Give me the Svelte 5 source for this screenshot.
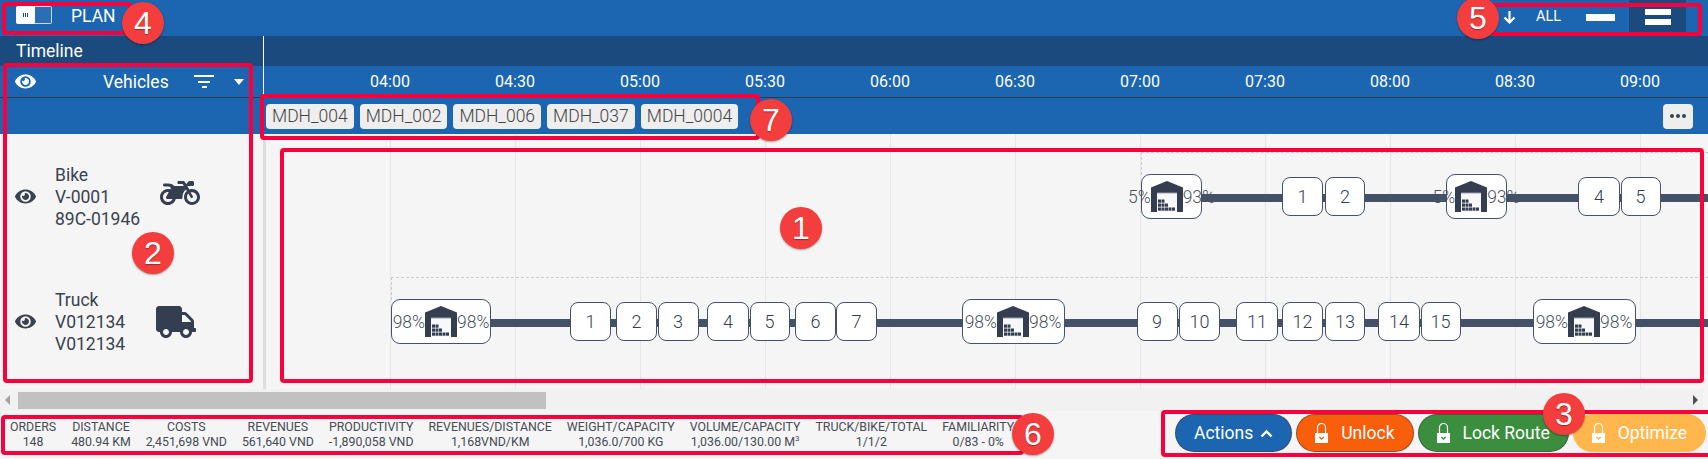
<script>
	const times = ['04:00', '04:30', '05:00', '05:30', '06:00', '06:30', '07:00', '07:30', '08:00', '08:30', '09:00'];
	const chips = ['MDH_004', 'MDH_002', 'MDH_006', 'MDH_037', 'MDH_0004'];

	// canvas origin is 266,134
	const grid = times.map((_, i) => 124 + i * 125);

	const lanes = [
		{ x: 875, top: 18, lineY: 64, lineX: 936 },
		{ x: 125, top: 143, lineY: 189, lineX: 225 }
	];

	const depots = [
		{ x: 875, y: 40, w: 61, a: '5%', b: '93%' },
		{ x: 1179.5, y: 40, w: 61, a: '5%', b: '93%' },
		{ x: 125, y: 165, w: 100, a: '98%', b: '98%' },
		{ x: 695.5, y: 165, w: 103, a: '98%', b: '98%' },
		{ x: 1266.5, y: 165, w: 103, a: '98%', b: '98%' }
	];

	const stops = [
		{ n: 1, x: 1016, y: 43, w: 41 },
		{ n: 2, x: 1059, y: 43, w: 40 },
		{ n: 4, x: 1312, y: 43, w: 42 },
		{ n: 5, x: 1354.5, y: 43, w: 40 },
		{ n: 1, x: 304, y: 168, w: 41 },
		{ n: 2, x: 350, y: 168, w: 41 },
		{ n: 3, x: 391.5, y: 168, w: 41 },
		{ n: 4, x: 441, y: 168, w: 42 },
		{ n: 5, x: 483.5, y: 168, w: 40 },
		{ n: 6, x: 529, y: 168, w: 41 },
		{ n: 7, x: 570, y: 168, w: 41 },
		{ n: 9, x: 870.5, y: 168, w: 41 },
		{ n: 10, x: 913, y: 168, w: 41 },
		{ n: 11, x: 970, y: 168, w: 42 },
		{ n: 12, x: 1016, y: 168, w: 41 },
		{ n: 13, x: 1059, y: 168, w: 40 },
		{ n: 14, x: 1112, y: 168, w: 42 },
		{ n: 15, x: 1154.5, y: 168, w: 40 }
	];

	const stats = [
		['ORDERS', '148'],
		['DISTANCE', '480.94 KM'],
		['COSTS', '2,451,698 VND'],
		['REVENUES', '561,640 VND'],
		['PRODUCTIVITY', '-1,890,058 VND'],
		['REVENUES/DISTANCE', '1,168VND/KM'],
		['WEIGHT/CAPACITY', '1,036.0/700 KG'],
		['VOLUME/CAPACITY', '1,036.00/130.00 M', '3'],
		['TRUCK/BIKE/TOTAL', '1/1/2'],
		['FAMILIARITY', '0/83 - 0%']
	];

	const boxes = [
		[7, 18.5], [10.5, 18.5],
		[7, 22.5], [10.5, 22.5], [14, 22.5],
		[7, 26.5], [10.5, 26.5], [14, 26.5], [17.5, 26.5], [21, 26.5]
	];

	const frames = [
		{ x: 2, y: 2, w: 130, h: 33 },
		{ x: 3, y: 63, w: 250, h: 320 },
		{ x: 280, y: 148, w: 1424, h: 235 },
		{ x: 260, y: 94, w: 500, h: 46 },
		{ x: 1491, y: 3, w: 211, h: 33 },
		{ x: 1, y: 415, w: 1023, h: 40 },
		{ x: 1161, y: 410, w: 560, h: 47 }
	];

	const badges = [
		{ n: 1, x: 801, y: 228 },
		{ n: 2, x: 153, y: 253 },
		{ n: 3, x: 1564, y: 414 },
		{ n: 4, x: 143, y: 23 },
		{ n: 5, x: 1478, y: 18 },
		{ n: 6, x: 1033, y: 434 },
		{ n: 7, x: 771, y: 120 }
	];
</script>

{#snippet eye()}
	<svg class="eye" viewBox="0 0 576 512">
		<path fill="currentColor" d="M572.52 241.4C518.29 135.59 410.93 64 288 64S57.68 135.64 3.48 241.41a32.35 32.35 0 0 0 0 29.19C57.71 376.41 165.07 448 288 448s230.32-71.64 284.52-177.41a32.35 32.35 0 0 0 0-29.19zM288 400a144 144 0 1 1 144-144 143.93 143.93 0 0 1-144 144zm0-240a95.31 95.31 0 0 0-25.31 3.79 47.85 47.85 0 0 1-66.9 66.9A95.78 95.78 0 1 0 288 160z" />
	</svg>
{/snippet}

{#snippet lock()}
	<svg class="lock" viewBox="0 0 13 20">
		<path d="M2.5 11V4.5a4 4 0 0 1 8 0V11" fill="none" stroke="#fff" stroke-width="1.2" />
		<rect y="10" width="13" height="10" fill="#fff" />
		<path class="tick" d="M4.3 14l2.2 2 2.2-2" fill="none" stroke-width="1.4" />
	</svg>
{/snippet}

<div class="page">
	<header class="topbar">
		<div class="left">
			<span class="toggle">
				<span class="on"><i></i><i></i><i></i></span>
				<span class="off"></span>
			</span>
			<span class="plan">PLAN</span>
		</div>
		<div class="right">
			<svg class="arrow" viewBox="0 0 13 14">
				<path d="M6.5 1v11M1.5 7.5l5 5 5-5" fill="none" stroke="#fff" stroke-width="2.2" />
			</svg>
			<span class="all">ALL</span>
			<span class="dash"></span>
			<span class="dbl"><i></i><i></i></span>
		</div>
	</header>

	<div class="tl-row">
		<div class="tl-left">Timeline</div>
		<div class="tl-right"></div>
	</div>

	<div class="head">
		<div class="head-left">
			{@render eye()}
			<span class="veh">Vehicles</span>
			<span class="filter"><i></i><i></i><i></i></span>
			<span class="caret"></span>
		</div>
		<div class="times">
			{#each times as t}
				<span>{t}</span>
			{/each}
		</div>
	</div>

	<div class="chips-row">
		<div class="chips">
			{#each chips as c}
				<span class="chip">{c}</span>
			{/each}
		</div>
		<button class="more"><i></i><i></i><i></i></button>
	</div>

	<div class="main">
		<aside class="vehicles">
			<div class="vehicle">
				{@render eye()}
				<div class="info">
					<div>Bike</div>
					<div>V-0001</div>
					<div>89C-01946</div>
				</div>
				<svg class="bike" viewBox="0 0 640 512">
					<path fill-rule="evenodd" d="M512.9 192c-14.9-.1-29.1 2.3-42.4 6.9L437.6 144H520c13.3 0 24-10.7 24-24V88c0-13.3-10.7-24-24-24h-45.3c-6.8 0-13.3 2.9-17.8 7.9l-37.5 41.7-22.8-38C392.2 68.4 384.4 64 376 64h-80c-8.8 0-16 7.2-16 16v16c0 8.8 7.2 16 16 16h66.4l19.2 32H227.9c-17.7-23.1-44.9-40-99.9-40H72.5C59 104 47.7 115 48 128.5c.2 13 10.9 23.5 24 23.5h56c24.5 0 38.7 10.9 47.8 24.8l-11.3 20.5c-13-3.9-26.9-5.7-41.3-5.2C55.9 194.5 1.6 249.6 0 317c-1.6 72.1 56.3 131 128 131 59.6 0 109.7-40.8 124-96h84.2c13.7 0 24.6-11.4 24-25.1-2.1-47.1 17.5-93.7 56.2-125l12.5 20.8c-27.6 23.7-45.1 58.9-44.8 98.2.5 69.6 57.2 126.5 126.8 127.1 71.6.7 129.8-57.5 129.2-129.1-.7-69.6-57.6-126.4-127.3-126.9zM128 400c-44.1 0-80-35.9-80-80s35.9-80 80-80c4.2 0 8.4.3 12.5 1L99 316.4c-8.8 16 2.8 35.6 21 35.6h81.3c-12.4 28.2-40.6 48-73.3 48zM512 400c-44.1 0-80-35.9-80-80 0-21 8.1-40 21.3-54.3l40.4 67.2c3.4 5.7 10.8 7.5 16.5 4.1l13.7-8.3c5.7-3.4 7.5-10.8 4.1-16.5l-39.3-65.4c7.6-2.3 15.5-3.5 23.3-3.5 44.1 0 80 35.9 80 80s-35.9 77-80 77z" />
				</svg>
			</div>
			<div class="vehicle">
				{@render eye()}
				<div class="info">
					<div>Truck</div>
					<div>V012134</div>
					<div>V012134</div>
				</div>
				<svg class="truck" viewBox="0 0 640 512">
					<path d="M624 352h-16V243.9c0-12.7-5.1-24.9-14.1-33.9L494 110.1c-9-9-21.2-14.1-33.9-14.1H416V48c0-26.5-21.5-48-48-48H48C21.5 0 0 21.5 0 48v320c0 26.5 21.5 48 48 48h16c0 53 43 96 96 96s96-43 96-96h128c0 53 43 96 96 96s96-43 96-96h48c8.8 0 16-7.2 16-16v-32c0-8.8-7.2-16-16-16zM160 464c-26.5 0-48-21.5-48-48s21.5-48 48-48 48 21.5 48 48-21.5 48-48 48zm320 0c-26.5 0-48-21.5-48-48s21.5-48 48-48 48 21.5 48 48-21.5 48-48 48zm80-208H416V144h44.1l99.9 99.9V256z" />
				</svg>
			</div>
		</aside>

		<div class="canvas">
			{#each grid as x}
				<span class="gridline" style="left:{x}px"></span>
			{/each}
			{#each lanes as l}
				<span class="lane" style="left:{l.x}px;top:{l.top}px"></span>
				<span class="route" style="left:{l.lineX}px;top:{l.lineY - 4}px"></span>
			{/each}
			{#each depots as d}
				<div class="depot" style="left:{d.x}px;top:{d.y}px;width:{d.w}px">
					<span>{d.a}</span>
					<svg class="house" viewBox="0 0 32 31">
						<path d="M16 0l16 6.5V31h-6V12H6v19H0V6.5z" />
						<rect x="6" y="12" width="20" height="19" fill="#f7f8f9" />
						<path d="M6 12h20" stroke="#9aa1ac" stroke-width="1" />
						{#each boxes as b}
							<rect x={b[0]} y={b[1]} width="3" height="3.2" />
						{/each}
					</svg>
					<span>{d.b}</span>
				</div>
			{/each}
			{#each stops as s}
				<div class="stop" style="left:{s.x}px;top:{s.y}px;width:{s.w}px">{s.n}</div>
			{/each}
		</div>
	</div>

	<div class="hscroll">
		<span class="tri l"></span>
		<span class="thumb"></span>
		<span class="tri r"></span>
	</div>

	<footer class="bottom">
		<div class="stats">
			{#each stats as s}
				<div class="stat">
					<div>{s[0]}</div>
					<div>{s[1]}{#if s[2]}<sup>{s[2]}</sup>{/if}</div>
				</div>
			{/each}
		</div>
		<div class="actions">
			<button class="btn blue">Actions
				<svg class="chev" viewBox="0 0 13 9"><path d="M1.5 7.5l5-5 5 5" fill="none" stroke="#fff" stroke-width="2.4" /></svg>
			</button>
			<button class="btn orange">{@render lock()}Unlock</button>
			<button class="btn green">{@render lock()}Lock Route</button>
			<button class="btn amber">{@render lock()}Optimize</button>
		</div>
	</footer>

	{#each frames as f}
		<span class="frame" style="left:{f.x}px;top:{f.y}px;width:{f.w}px;height:{f.h}px"></span>
	{/each}
	{#each badges as b}
		<span class="badge" style="left:{b.x - 21}px;top:{b.y - 21}px">{b.n}</span>
	{/each}
</div>

<style>
	:global(body) {
		margin: 0;
		background: #f5f5f5;
	}
	.page {
		position: relative;
		width: 1708px;
		height: 459px;
		overflow: hidden;
		background: #f5f5f5;
		font-family: Roboto, "Liberation Sans", sans-serif;
		color: #39424f;
	}
	i {
		display: block;
	}

	/* top bar */
	.topbar {
		height: 36px;
		background: #1c65b0;
		display: flex;
		justify-content: space-between;
		color: #fff;
	}
	.left {
		display: flex;
		align-items: center;
		padding-left: 16px;
		height: 30px;
	}
	.toggle {
		display: flex;
		width: 36px;
		height: 18px;
	}
	.on {
		width: 19px;
		background: #fff;
		border-radius: 2px 0 0 2px;
		display: flex;
		gap: 1px;
		align-items: center;
		justify-content: center;
	}
	.on i {
		width: 1px;
		height: 4px;
		background: #1a4a7e;
	}
	.off {
		flex: 1;
		border: 1px solid #c9d9ea;
		border-left: 0;
		border-radius: 0 2px 2px 0;
		background: #2a6fb6;
	}
	.plan {
		margin: 2px 0 0 19px;
		font-size: 17.5px;
	}
	.right {
		display: flex;
		align-items: center;
		padding-right: 22px;
		height: 33px;
	}
	.arrow {
		width: 13px;
		height: 14px;
	}
	.all {
		margin-left: 20px;
		font-size: 14.5px;
	}
	.dash {
		width: 29px;
		height: 7px;
		background: #fff;
		margin: 1px 0 0 25px;
	}
	.dbl {
		margin-left: 14px;
		width: 57px;
		height: 33px;
		background: #1a4a7e;
		display: flex;
		flex-direction: column;
		align-items: center;
		justify-content: center;
		gap: 4px;
	}
	.dbl i {
		width: 26px;
		height: 6px;
		background: #fff;
	}

	/* timeline strip */
	.tl-row {
		height: 30px;
		background: #1a4a7e;
		display: flex;
	}
	.tl-left {
		width: 247px;
		padding-left: 16px;
		border-right: 1px solid #fff;
		color: #fff;
		font-size: 17.5px;
		line-height: 30px;
	}

	.head {
		height: 31px;
		background: #1c65b0;
		border-bottom: 1px solid #2b3a4d;
		display: flex;
		color: #fff;
	}
	.head-left {
		width: 248px;
		padding-left: 15px;
		border-right: 1px solid #fff;
		display: flex;
		align-items: center;
	}
	.eye {
		width: 21px;
		height: 19px;
		flex: none;
	}
	.veh {
		margin-left: 67px;
		font-size: 17.5px;
		width: 66px;
	}
	.filter {
		margin-left: 25px;
		width: 20px;
		display: flex;
		flex-direction: column;
		align-items: center;
		gap: 3.5px;
	}
	.filter i {
		height: 2px;
		background: #fff;
		width: 20px;
	}
	.filter i:nth-child(2) {
		width: 12px;
	}
	.filter i:nth-child(3) {
		width: 5px;
	}
	.caret {
		margin-left: 20px;
		border-left: 5px solid transparent;
		border-right: 5px solid transparent;
		border-top: 6px solid #fff;
	}
	.times {
		display: flex;
		padding-left: 63.5px;
		align-items: center;
		font-size: 16px;
	}
	.times span {
		width: 125px;
		text-align: center;
	}

	.chips-row {
		height: 36px;
		background: #1c65b0;
		display: flex;
		justify-content: space-between;
		align-items: center;
		padding: 0 15px 0 266px;
	}
	.chips {
		display: flex;
		gap: 6px;
	}
	.chip {
		height: 25px;
		line-height: 25px;
		padding: 0 6px;
		background: #eee;
		border-radius: 4px;
		font-size: 17.5px;
		font-weight: 300;
		color: #444;
	}
	.more {
		width: 30px;
		height: 25px;
		padding: 0;
		border: 0;
		background: #eee;
		border-radius: 4px;
		display: flex;
		gap: 2px;
		align-items: center;
		justify-content: center;
	}
	.more i {
		width: 4px;
		height: 4px;
		border-radius: 50%;
		background: #39424f;
	}

	/* body */
	.main {
		height: 255px;
		display: flex;
	}
	.vehicles {
		width: 263px;
		border-right: 3px solid #ddd;
		flex: none;
	}
	.vehicle {
		height: 125px;
		padding-left: 15px;
		display: flex;
		align-items: center;
		box-sizing: border-box;
		color: #39424f;
	}
	.vehicle .eye {
		margin-top: -1px;
	}
	.info {
		margin-left: 20px;
		width: 100px;
		font-size: 17.5px;
		line-height: 22px;
		text-indent: -1px;
	}
	.bike {
		width: 40px;
		height: 32px;
		margin: -8px 0 0 4px;
		fill: #343e50;
	}
	.truck {
		width: 40px;
		height: 32px;
		fill: #343e50;
	}
	.canvas {
		position: relative;
		flex: 1;
		overflow: hidden;
	}
	.gridline {
		position: absolute;
		top: 0;
		bottom: 0;
		width: 1px;
		background: #e6e6e6;
	}
	.lane {
		position: absolute;
		right: 0;
		height: 22px;
		border-top: 1px dashed #ccc;
		border-left: 1px dashed #ccc;
	}
	.route {
		position: absolute;
		right: 0;
		height: 8px;
		background: #445268;
	}
	.depot,
	.stop {
		position: absolute;
		box-sizing: border-box;
		background: #fff;
		border: 1px solid #445268;
		display: flex;
		align-items: center;
		justify-content: center;
		font-size: 17.5px;
		white-space: nowrap;
	}
	.depot {
		height: 45px;
		border-radius: 9px;
		font-weight: 300;
		color: #4a5260;
	}
	.depot span {
		flex: none;
	}
	.house {
		width: 32px;
		height: 31px;
		flex: none;
		fill: #343e50;
	}
	.stop {
		height: 39px;
		border-radius: 8px;
		font-size: 18px;
		font-weight: 300;
		color: #343e50;
	}

	.hscroll {
		height: 22px;
		background: #f1f1f1;
		position: relative;
		display: flex;
		align-items: center;
		margin-right: 5px;
	}
	.thumb {
		height: 17px;
		width: 528px;
		margin-left: 18px;
		background: #c1c1c1;
	}
	.tri {
		position: absolute;
		border-top: 5px solid transparent;
		border-bottom: 5px solid transparent;
	}
	.tri.l {
		left: 5px;
		border-right: 5px solid #a3a3a3;
	}
	.tri.r {
		right: 5px;
		border-left: 5px solid #505050;
	}

	/* footer */
	.bottom {
		height: 48px;
		display: flex;
		justify-content: space-between;
		align-items: center;
		padding: 0 2px 0 10px;
	}
	.stats {
		display: flex;
		gap: 15px;
		font-size: 12.35px;
		line-height: 15px;
		text-align: center;
		color: #454b55;
	}
	sup {
		font-size: 8px;
		line-height: 0;
	}
	.actions {
		display: flex;
		gap: 4px;
		margin-top: -4px;
	}
	.btn {
		height: 38px;
		padding: 0 18px;
		border: 1px solid rgba(60, 60, 60, 0.55);
		border-radius: 19px;
		color: #fff;
		font: 17.5px Roboto, "Liberation Sans", sans-serif;
		display: flex;
		align-items: center;
		white-space: nowrap;
	}
	.blue {
		background: #1c65b0;
	}
	.orange {
		background: #f95e0a;
		--tick: #f95e0a;
	}
	.green {
		background: #3a8e3e;
		--tick: #3a8e3e;
	}
	.amber {
		background: #ffb74d;
		border-color: #ffb74d;
		--tick: #ffb74d;
	}
	.chev {
		width: 13px;
		height: 9px;
		margin-left: 7px;
	}
	.lock {
		width: 13px;
		height: 20px;
		margin-right: 13px;
		flex: none;
	}
	.tick {
		stroke: var(--tick);
	}

	/* callouts */
	.frame {
		position: absolute;
		box-sizing: border-box;
		border: 4px solid #f9003c;
		border-radius: 4px;
	}
	.badge {
		position: absolute;
		width: 42px;
		height: 42px;
		border-radius: 50%;
		background: #f43d3d;
		color: #fff;
		font: 32px/42px "Liberation Sans", sans-serif;
		text-align: center;
		text-shadow: 0 1px 1px rgba(0, 0, 0, 0.35);
		box-shadow: 0 1px 2px rgba(0, 0, 0, 0.35);
	}
</style>
